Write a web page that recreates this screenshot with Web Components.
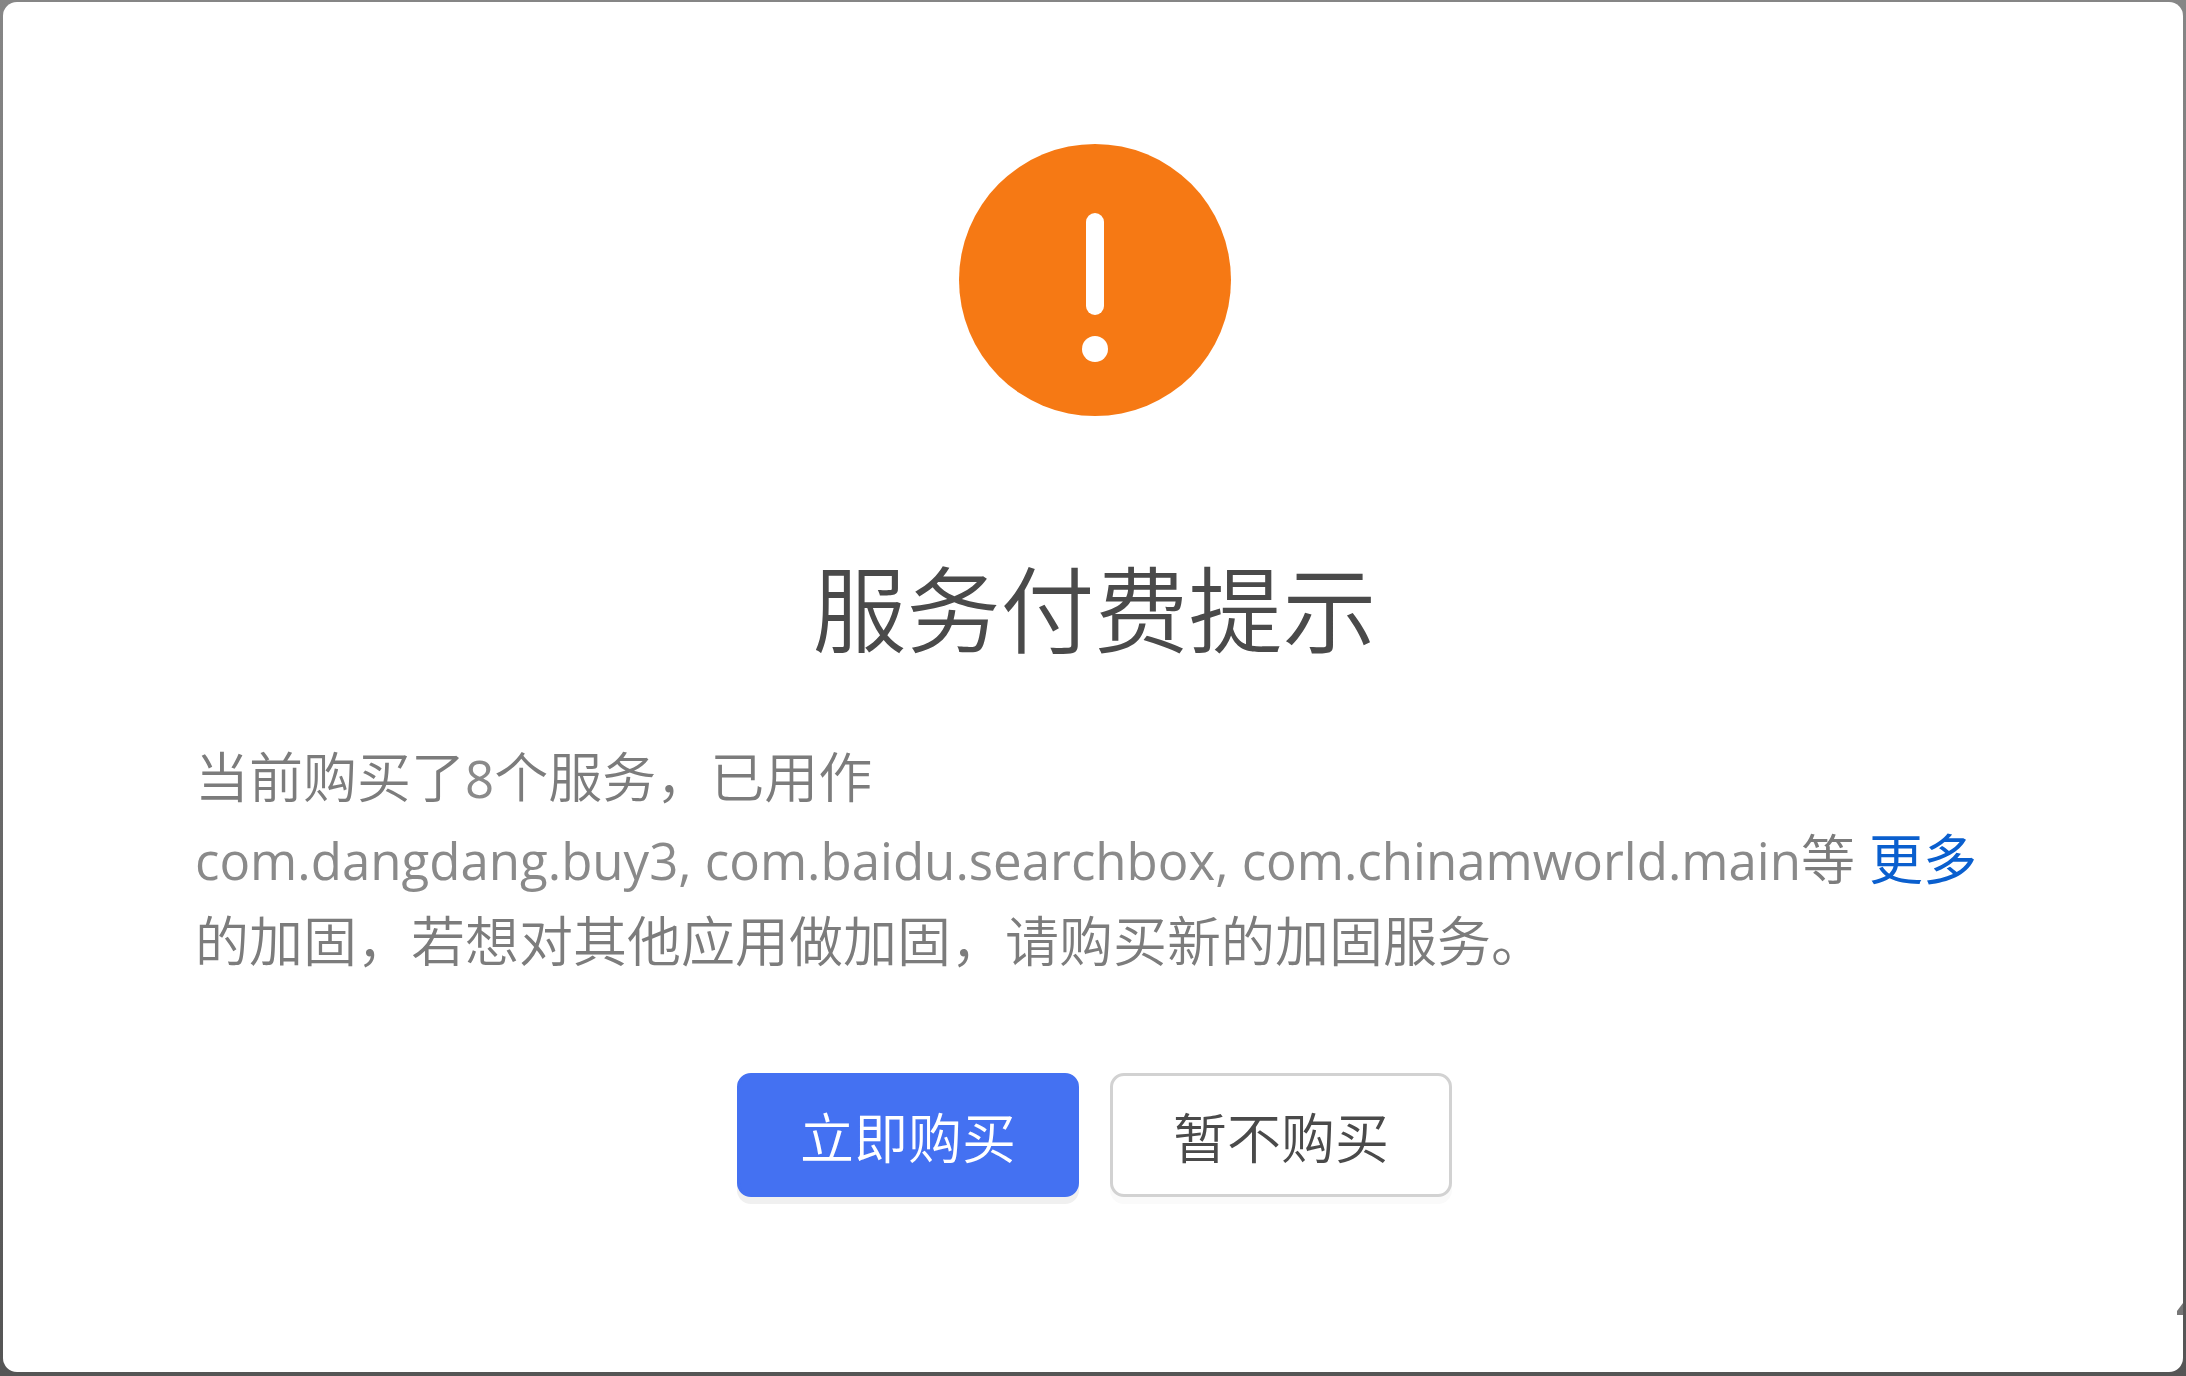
<!DOCTYPE html>
<html lang="zh-CN">
<head>
<meta charset="utf-8">
<title>服务付费提示</title>
<style>
html, body { height: 100%; }
body {
  margin: 0;
  background: linear-gradient(#868686, #555);
  font-family: "Open Sans", "Noto Sans CJK SC", sans-serif;
}
</style>
</head>
<body>
<notice-dialog>
  <warning-icon slot="icon"></warning-icon>
  <span slot="title">服务付费提示</span>
  <notice-text slot="body"></notice-text>
  <action-button slot="actions" kind="primary">立即购买</action-button>
  <action-button slot="actions">暂不购买</action-button>
</notice-dialog>
<script>
class Base extends HTMLElement {
  constructor() {
    super();
    this.attachShadow({ mode: "open" }).innerHTML = this.constructor.markup;
  }
}

customElements.define("warning-icon", class extends Base {
  static markup = `
    <style>:host { display: block; width: 272px; height: 272px; } svg { display: block; width: 100%; height: 100%; }</style>
    <svg viewBox="0 0 272 272" role="img" aria-label="警告">
      <circle cx="136" cy="136" r="136" fill="#f67914"/>
      <rect x="127" y="69" width="18" height="102" rx="9" fill="#fff"/>
      <circle cx="136" cy="205" r="13" fill="#fff"/>
    </svg>`;
});

customElements.define("notice-text", class extends Base {
  static markup = `
    <style>
      :host { display: block; }
      p { margin: 0; font-size: 54px; line-height: 82px; font-weight: 350; color: #7c7c7c; }
      .id { font-size: 51px; line-height: 1; font-weight: 400; color: #8a8a8a; }
      a { color: #0a5fce; text-decoration: none; font-weight: 400; }
    </style>
    <p>当前购买了<span class="id">8</span>个服务，已用作<br><span class="id">com.dangdang.buy3, com.baidu.searchbox, com.chinamworld.main</span>等 <a href="#more">更多</a><br>的加固，若想对其他应用做加固，请购买新的加固服务。</p>`;
});

customElements.define("action-button", class extends Base {
  static markup = `
    <style>
      :host { display: block; }
      button {
        display: block; box-sizing: border-box; height: 124px; padding: 2px 60px 0;
        border: 3px solid #d2d2d2; border-radius: 14px; background: #fff; color: #4a4a4a;
        font: 350 54px/80px "Noto Sans CJK SC", sans-serif;
        box-shadow: 0 7px 0 #fafafa; cursor: pointer;
      }
      :host([kind="primary"]) button {
        border-color: #4471f2; background: #4471f2; color: #fff; box-shadow: 0 7px 0 #f0f0f0;
      }
    </style>
    <button type="button"><slot></slot></button>`;
});

customElements.define("notice-dialog", class extends Base {
  static markup = `
    <style>
      :host { display: block; box-sizing: border-box; min-height: 100%; height: 100%; padding: 2px 3px 4px; }
      section {
        position: relative; box-sizing: border-box; min-height: 100%;
        display: flex; flex-direction: column; align-items: center;
        padding: 142px 189px 0 192px; border-radius: 14px; background: #fff;
      }
      h1 {
        margin: 121px 0 0; font: 350 94px/136px "Noto Sans CJK SC", sans-serif; color: #4a4a4a;
      }
      .body { align-self: stretch; margin-top: 63px; }
      .actions { display: flex; gap: 31px; margin-top: 91px; }
      .edge { position: absolute; right: 0; bottom: 57px; width: 6px; height: 12px; }
    </style>
    <section role="dialog" aria-labelledby="t">
      <slot name="icon"></slot>
      <h1 id="t"><slot name="title"></slot></h1>
      <div class="body"><slot name="body"></slot></div>
      <div class="actions"><slot name="actions"></slot></div>
      <svg class="edge" viewBox="0 0 6 12" aria-hidden="true"><path d="M6 0V12H0V8L3 4Z" fill="#777"/></svg>
    </section>`;
});
</script>
</body>
</html>
